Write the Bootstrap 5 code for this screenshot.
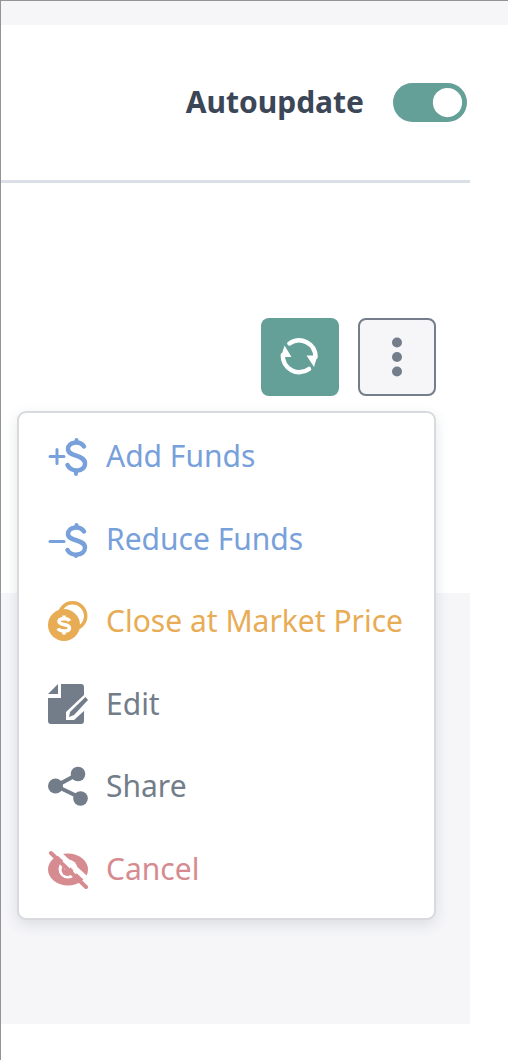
<!DOCTYPE html>
<html lang="en">
<head>
<meta charset="utf-8">
<meta name="viewport" content="width=device-width, initial-scale=1">
<title>Autoupdate</title>
<link href="https://cdn.jsdelivr.net/npm/bootstrap@5.3.0/dist/css/bootstrap.min.css" rel="stylesheet">
<style>
  body { font-family: "Noto Sans", sans-serif; background: #fff; color: #3b4657; }
  .page-frame { min-height: 100vh; border-top: 1px solid #949497; border-left: 1px solid #949497; }
  .top-strip { height: 24px; background: #f6f6f9; }
  .page-body { padding-right: 38px; }
  .update-bar { height: 158px; border-bottom: 3px solid #dae0e5; gap: 29px; padding-right: 3px; }
  .update-label { font-size: 30px; line-height: 40px; font-weight: 700; padding-bottom: 2px; }
  .form-check-input.update-switch { width: 74px; height: 39px; margin: 0; border: 0; box-shadow: none;
    --bs-form-switch-bg: url("data:image/svg+xml,%3csvg xmlns='http://www.w3.org/2000/svg' viewBox='-4 -4 8 8'%3e%3ccircle r='3' fill='%23fff'/%3e%3c/svg%3e"); }
  .form-check-input.update-switch:checked { background-color: #64a098; }
  .actions { padding: 135px 34px 0 0; gap: 19px; }
  .tool { width: 78px; height: 78px; border-radius: 8px; padding: 0; }
  .tool-refresh { background: #64a098; }
  .tool-more { background: #f6f6f9; border: 2px solid #737d8c; }
  .tool svg { display: block; margin: auto; }
  .dropdown-menu.order-menu { margin-top: 15px; width: 419px; padding: 2px 0 8px; border: 2px solid #d8dade; border-radius: 9px; box-shadow: 0 5px 14px rgba(59, 75, 90, .14); }
  .order-list { min-height: 495px; grid-auto-rows: 1fr; }
  .order-menu .dropdown-item { height: 100%; padding: 0 29px; gap: 18px; font-size: 30px; line-height: 40px; }
  .order-menu svg { flex: none; }
  .tone-blue, .tone-blue:hover { color: #78a0da; }
  .tone-gold, .tone-gold:hover { color: #e8ac55; }
  .tone-slate, .tone-slate:hover { color: #727d89; }
  .tone-red, .tone-red:hover { color: #d68b91; }
  .lower-panel { margin-top: 197px; height: 431px; background: #f6f6f9; }
</style>
</head>
<body>
<div class="page-frame">
  <div class="top-strip"></div>
  <main class="page-body">
    <div class="update-bar form-switch d-flex align-items-center justify-content-end">
      <label class="update-label" for="autoupdate">Autoupdate</label>
      <input class="form-check-input update-switch" type="checkbox" role="switch" id="autoupdate" checked>
    </div>
    <div class="actions d-flex justify-content-end">
      <button type="button" class="btn tool tool-refresh border-0" aria-label="Refresh">
        <svg width="40" height="40" viewBox="0 0 40 40" fill="none" stroke="#fff" stroke-width="4.500">
          <path d="M9.500 6.500A16.500 16.500 0 0 1 35.500 20" stroke-linecap="round"/><path d="M29 32A16.500 16.500 0 0 1 2.800 18" stroke-linecap="round"/>
          <path d="M26.500 18.500h11L34 30zM11.500 20H1L4.500 8.500z" fill="#fff" stroke="none"/>
        </svg>
      </button>
      <div class="dropdown">
        <button type="button" class="btn tool tool-more" aria-label="More actions" aria-expanded="true" data-bs-toggle="dropdown" data-bs-display="static">
          <svg width="12" height="40" viewBox="0 0 12 40" fill="#737d8c"><circle cx="6" cy="5.500" r="5"/><circle cx="6" cy="20" r="5"/><circle cx="6" cy="34.500" r="5"/></svg>
        </button>
        <div class="dropdown-menu dropdown-menu-end order-menu show" data-bs-popper="static">
          <ul class="order-list list-unstyled d-grid mb-0">
            <li><a class="dropdown-item d-flex align-items-center tone-blue" href="#">
              <svg width="40" height="40" viewBox="0 0 40 40" fill="none" stroke="currentColor" stroke-linecap="round"><path stroke-width="3" d="M2 20.500h14M9 13.500v14"/><path stroke-width="4.500" d="M36 10.500C32 4.500 20 5.500 20 13C20 21 37 18.500 37 27.500C37 36 23 37 19.500 29"/><path stroke-width="4" d="M28.500 4v2M28 36v2"/></svg>
              <span>Add Funds</span></a></li>
            <li><a class="dropdown-item d-flex align-items-center tone-blue" href="#">
              <svg width="40" height="40" viewBox="0 0 40 40" fill="none" stroke="currentColor" stroke-linecap="round"><path stroke-width="3" d="M2 22.500h14"/><path stroke-width="4.500" d="M36 12.500C32 6.500 20 7.500 20 15C20 22.500 37 20 37 28.500C37 37 23 38 19.500 31"/><path stroke-width="4" d="M28.500 6v2M28 36v1"/></svg>
              <span>Reduce Funds</span></a></li>
            <li><a class="dropdown-item d-flex align-items-center tone-gold" href="#">
              <svg width="40" height="40" viewBox="0 0 40 40" fill="none"><circle cx="24.500" cy="15" r="13.200" stroke="currentColor" stroke-width="3.500"/><circle cx="16" cy="24" r="16" fill="currentColor"/><path stroke="#fff" stroke-width="3.500" d="M21.500 20C20 17 11 17 11 20.500C11 24.500 21.500 22.500 21.500 27C21.500 31 12 31 10 27.500M16 14.500v4M16 29v4.500"/></svg>
              <span>Close at Market Price</span></a></li>
            <li><a class="dropdown-item d-flex align-items-center tone-slate" href="#">
              <svg width="40" height="40" viewBox="0 0 40 40" fill="currentColor"><path d="M0 10L10 0v10z"/><path d="M13 0h20q3 0 3 3v8L18 28v8h8L36 27v10q0 3-3 3H3q-3 0-3-3V14h13z"/><path d="M37.500 13l2.500 3L26 31 21 33l1-5z"/></svg>
              <span>Edit</span></a></li>
            <li><a class="dropdown-item d-flex align-items-center tone-slate" href="#">
              <svg width="40" height="40" viewBox="0 0 40 40" fill="currentColor"><path d="M30 8L8 20l25 12" fill="none" stroke="currentColor" stroke-width="4"/><circle cx="30" cy="8" r="7.300"/><circle cx="7.500" cy="20" r="7.500"/><circle cx="32.500" cy="32.500" r="7.300"/></svg>
              <span>Share</span></a></li>
            <li><a class="dropdown-item d-flex align-items-center tone-red" href="#">
              <svg width="40" height="40" viewBox="0 0 40 40" fill="none"><ellipse cx="20" cy="20.500" rx="20" ry="16" fill="currentColor"/><circle cx="20" cy="20" r="9.500" fill="#fff"/><circle cx="19.500" cy="21" r="6" fill="currentColor"/><circle cx="19" cy="18" r="3.200" fill="#fff"/><path stroke="#fff" stroke-width="5" d="M5 -1L43 34"/><path stroke="currentColor" stroke-width="4" stroke-linecap="round" d="M3 4l35 34"/></svg>
              <span>Cancel</span></a></li>
          </ul>
        </div>
      </div>
    </div>
    <div class="lower-panel"></div>
  </main>
</div>
<script src="https://cdn.jsdelivr.net/npm/bootstrap@5.3.0/dist/js/bootstrap.bundle.min.js"></script>
</body>
</html>
